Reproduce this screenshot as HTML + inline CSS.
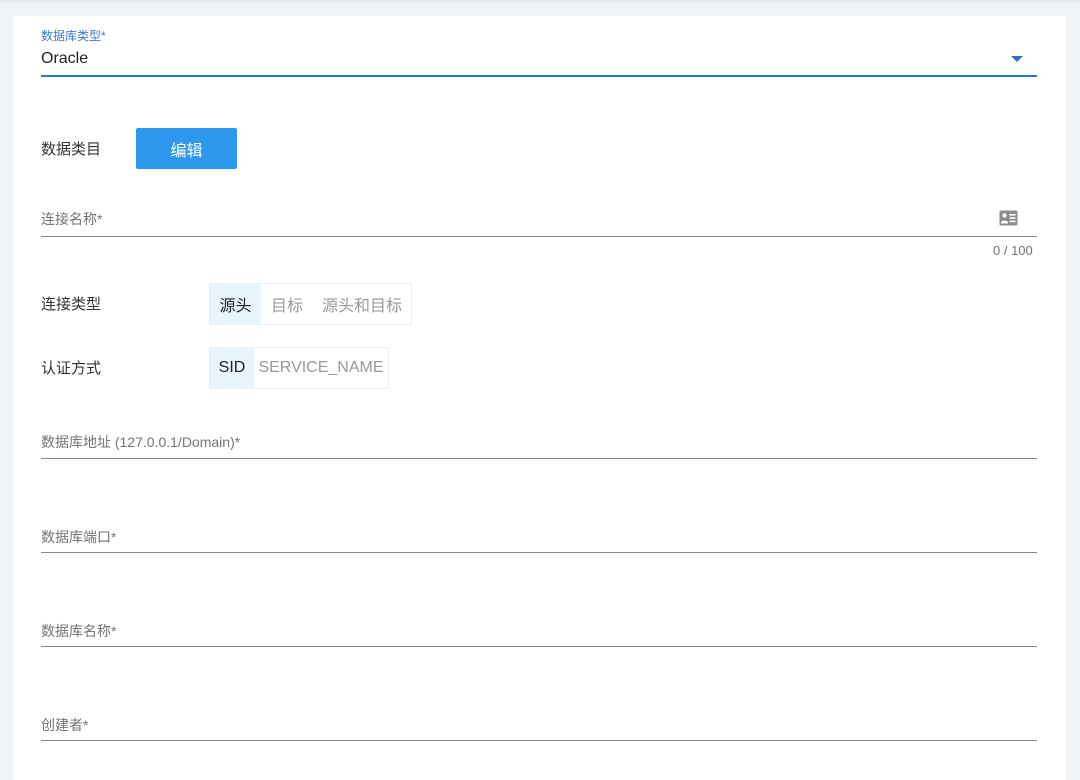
<!DOCTYPE html>
<html><head><meta charset="utf-8"><style>
body{margin:0;width:1080px;height:780px;background:#f1f4f7;font-family:"Liberation Sans","Noto Sans CJK SC",sans-serif;position:relative;overflow:hidden}
.top{position:absolute;left:0;top:0;width:1080px;height:4px;background:linear-gradient(#e2e5e8,#f1f4f7)}
.card{position:absolute;left:13px;top:16px;width:1053px;height:764px;background:#fff}
.a{position:absolute;white-space:nowrap}
.lbl{font-size:14px;color:#757575}
.line{position:absolute;left:41px;width:996px;height:1px;background:#8a8a8a}
.seg{position:absolute;height:42px;border:1px solid #e3eef6;display:flex;font-size:16px;box-sizing:border-box;white-space:nowrap}
.seg span{display:flex;align-items:center;justify-content:center;color:#9a9a9a;flex:none}
.seg span.on{background:#e8f5fd;color:#222}
</style></head><body>
<div class="top"></div>
<div class="card"></div>
<div class="a" style="left:41px;top:27px;font-size:12px;color:#3a7dc9">数据库类型*</div>
<div class="a" style="left:41px;top:49px;font-size:16px;color:#222;line-height:20px">Oracle</div>
<div class="a" style="left:1011px;top:56px;width:0;height:0;border-left:6px solid transparent;border-right:6px solid transparent;border-top:6px solid #2f6fc0"></div>
<div class="a" style="left:41px;top:75px;width:996px;height:2px;background:#2f72c4"></div>
<div class="a" style="left:41px;top:138px;font-size:15px;color:#333">数据类目</div>
<div class="a" style="left:136px;top:128px;width:101px;height:41px;background:#2e98ee;border-radius:2px;color:#fff;font-size:16px;display:flex;align-items:center;justify-content:center">编辑</div>
<div class="a lbl" style="left:41px;top:209px">连接名称*</div>
<svg class="a" style="left:999px;top:210px" width="19" height="16" viewBox="0 0 19 16"><rect x="0.5" y="0.5" width="18" height="15" rx="1.5" fill="#8c8c8c"/><circle cx="5.5" cy="5.5" r="2.2" fill="#fff"/><path d="M2 12.5c0-2.5 7-2.5 7 0v1H2z" fill="#fff"/><rect x="10.5" y="4" width="6" height="1.6" fill="#fff"/><rect x="10.5" y="7.3" width="6" height="1.6" fill="#fff"/><rect x="10.5" y="10.6" width="6" height="1.6" fill="#fff"/></svg>
<div class="line" style="top:236px"></div>
<div class="a" style="left:993px;top:243px;font-size:13px;color:#757575">0 / 100</div>
<div class="a" style="left:41px;top:293px;font-size:15px;color:#333">连接类型</div>
<div class="seg" style="left:209px;top:283px;width:203px"><span class="on" style="width:51px">源头</span><span style="width:52px">目标</span><span style="width:98px">源头和目标</span></div>
<div class="a" style="left:41px;top:357px;font-size:15px;color:#333">认证方式</div>
<div class="seg" style="left:209px;top:347px;width:180px"><span class="on" style="width:44px">SID</span><span style="width:134px">SERVICE_NAME</span></div>
<div class="a lbl" style="left:41px;top:432px">数据库地址 (127.0.0.1/Domain)*</div>
<div class="line" style="top:458px"></div>
<div class="a lbl" style="left:41px;top:527px">数据库端口*</div>
<div class="line" style="top:552px"></div>
<div class="a lbl" style="left:41px;top:621px">数据库名称*</div>
<div class="line" style="top:646px"></div>
<div class="a lbl" style="left:41px;top:715px">创建者*</div>
<div class="line" style="top:740px"></div>
</body></html>
